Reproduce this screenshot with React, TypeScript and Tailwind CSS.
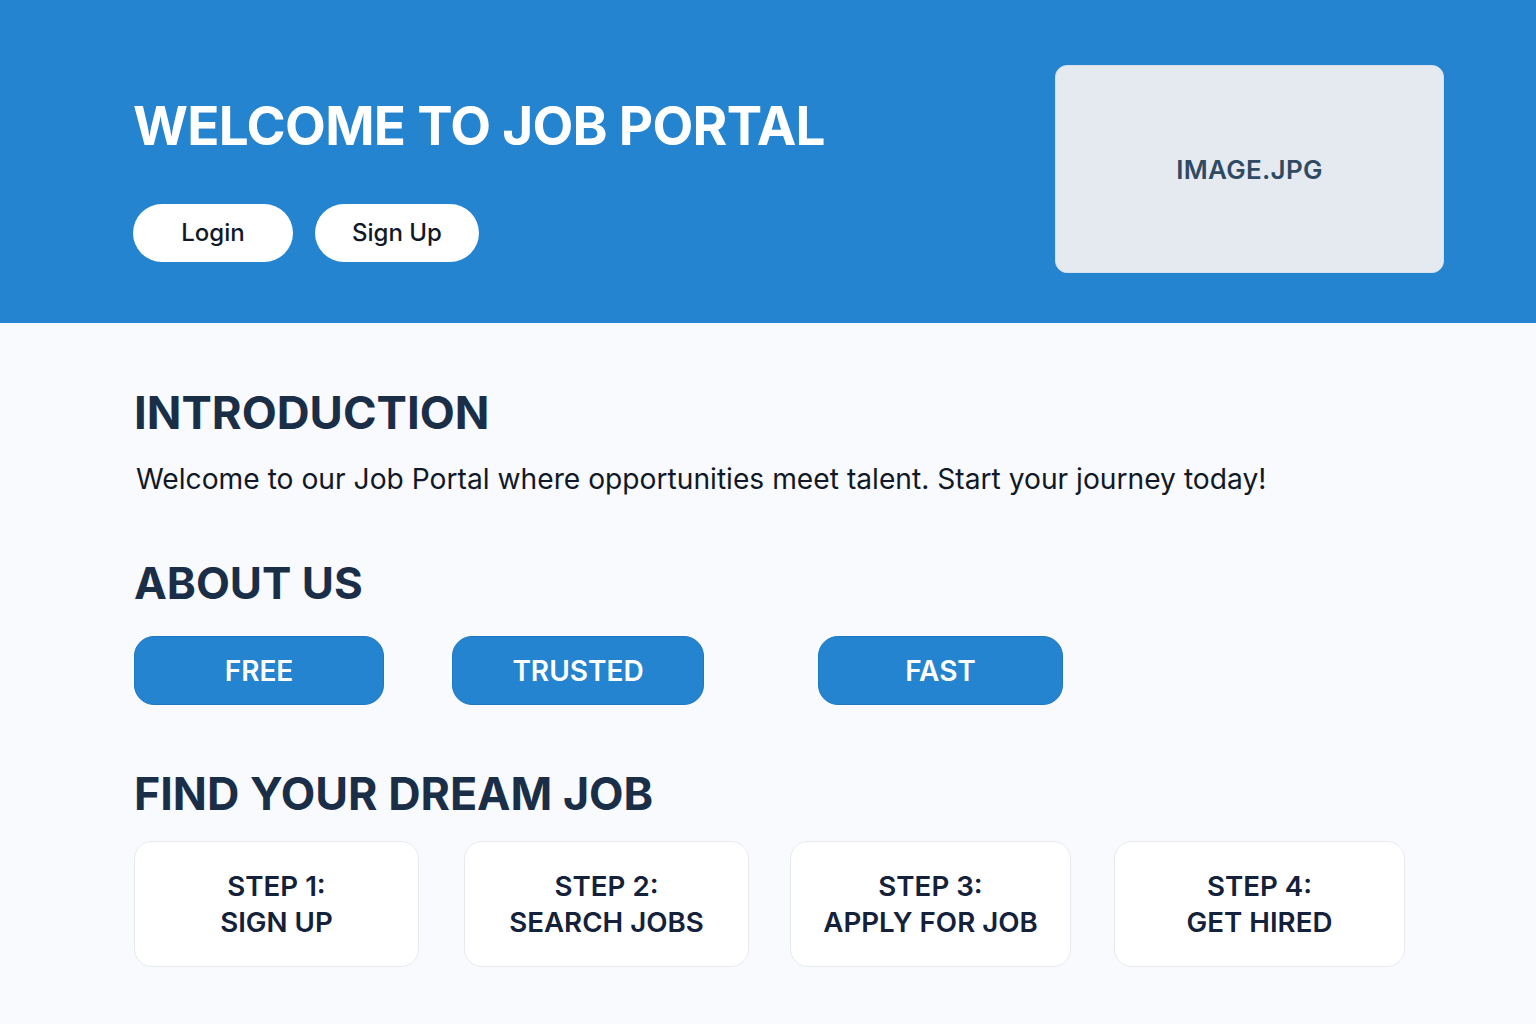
const features = [
  { label: 'FREE', cls: 'w-[250px]' },
  { label: 'TRUSTED', cls: 'w-[252px] ml-[68px]' },
  { label: 'FAST', cls: 'w-[245px] ml-[114px]' },
]

const steps = [
  { title: 'STEP 1:', text: 'SIGN UP', cls: 'w-[285px]' },
  { title: 'STEP 2:', text: 'SEARCH JOBS', cls: 'w-[285px] ml-[45px]' },
  { title: 'STEP 3:', text: 'APPLY FOR JOB', cls: 'w-[281px] ml-[41px]' },
  { title: 'STEP 4:', text: 'GET HIRED', cls: 'w-[291px] ml-[43px]' },
]

function App() {
  return (
    <div className="min-h-screen bg-[#f8fafd] font-['Inter',sans-serif] text-[#1b2e48]">
      {/* Hero */}
      <header className="h-[323px] bg-[#2584cf] flex justify-between pl-[133px] pr-[92px]">
        <div className="pt-[96px]">
          <h1 className="text-[53px] font-bold text-white tracking-[-0.7px] leading-[60px]">WELCOME TO JOB PORTAL</h1>
          <div className="flex gap-[22px] mt-[48px]">
            <button className="w-[160px] h-[58px] rounded-full bg-white text-[24px] font-medium text-[#111827]">Login</button>
            <button className="w-[164px] h-[58px] rounded-full bg-white text-[24px] font-medium text-[#111827]">Sign Up</button>
          </div>
        </div>
        <div className="mt-[65px] w-[389px] h-[208px] rounded-[12px] bg-[#e5eaf1] border border-[#d6e0ec] flex items-center justify-center">
          <span className="text-[26px] font-semibold text-[#2f4a62] tracking-[0.3px]">IMAGE.JPG</span>
        </div>
      </header>

      <main className="pl-[134px] pt-[62px] pb-[56px]">
        <section>
          <h2 className="text-[45.5px] font-bold leading-[56px]">INTRODUCTION</h2>
          <p className="mt-[20px] ml-[2px] text-[28.2px] text-[#111827] leading-[36px]">
            Welcome to our Job Portal where opportunities meet talent. Start your journey today!
          </p>
        </section>

        <section className="mt-[58px]">
          <h2 className="text-[44px] font-bold leading-[56px]">ABOUT US</h2>
          <div className="flex mt-[25px]">
            {features.map((f) => (
              <div
                key={f.label}
                className={`${f.cls} h-[69px] rounded-[20px] bg-[#2584cf] border border-[#1f78c2] flex items-center justify-center text-white text-[28px] font-semibold`}
              >
                {f.label}
              </div>
            ))}
          </div>
        </section>

        <section className="mt-[61px]">
          <h2 className="text-[44.8px] font-bold leading-[56px]">FIND YOUR DREAM JOB</h2>
          <div className="flex mt-[19px]">
            {steps.map((s) => (
              <div
                key={s.title}
                className={`${s.cls} h-[126px] rounded-[18px] bg-white border border-[#e6eaf0] flex flex-col items-center justify-center text-[27.7px] font-semibold leading-[36px] text-[#14213a]`}
              >
                <span>{s.title}</span>
                <span>{s.text}</span>
              </div>
            ))}
          </div>
        </section>
      </main>
    </div>
  )
}

export default App
